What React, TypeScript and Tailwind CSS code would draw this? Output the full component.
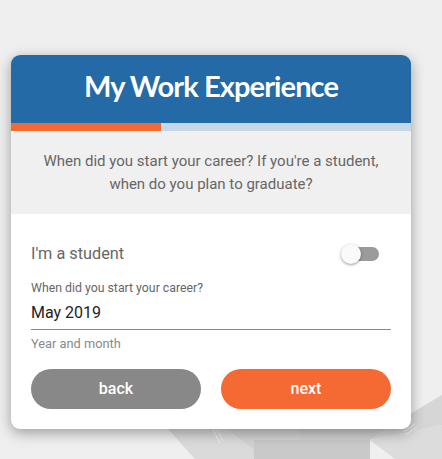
import { useState } from 'react'

function BackgroundArt() {
  return (
    <svg
      className="absolute left-0 top-0 pointer-events-none"
      width="442"
      height="459"
      viewBox="0 0 442 459"
    >
      <polygon points="160,420 215,420 265,459 195,459" fill="#dadada" />
      <polygon points="215,420 300,420 300,459 265,459" fill="#d2d2d2" />
      <polygon points="254,440 370,440 370,459 254,459" fill="#c9c9c9" />
      <polygon points="300,420 400,420 370,440 300,440" fill="#cfcfcf" />
      <polygon points="370,440 442,425 442,459 395,459" fill="#dcdcdc" />
      <polygon points="400,420 442,395 442,425 370,440" fill="#d6d6d6" />
      <line x1="213" y1="430" x2="220" y2="443" stroke="#f2f2f2" strokeWidth="1" />
      <line x1="217" y1="430" x2="223" y2="441" stroke="#f2f2f2" strokeWidth="1" />
      <line x1="403" y1="432" x2="415" y2="424" stroke="#f2f2f2" strokeWidth="1" />
      <line x1="405" y1="435" x2="417" y2="427" stroke="#f2f2f2" strokeWidth="1" />
    </svg>
  )
}

export default function App() {
  const [student, setStudent] = useState(false)

  return (
    <div className="relative w-[442px] h-[459px] overflow-hidden bg-[#efefef] pt-[55px] pl-[11px] font-['Roboto',sans-serif]">
      <BackgroundArt />

      <div className="relative w-[400px] rounded-[9px] bg-white shadow-[0_4px_14px_rgba(0,0,0,0.35)] overflow-hidden">
        {/* Header */}
        <div className="h-[68px] bg-[#246aa7] flex items-center justify-center">
          <h1 className="text-white text-[29px] font-bold tracking-[-0.9px] font-['Lato',sans-serif] leading-none pb-[7px]">
            My Work Experience
          </h1>
        </div>

        {/* Progress */}
        <div className="h-2 bg-[#c6d8e8]">
          <div className="h-full w-[150px] bg-[#f56932]" />
        </div>

        {/* Question */}
        <div className="bg-[#f0f0f0] px-4 pt-[19px] pb-[18px] text-center text-[15px] leading-[23px] text-[#666]">
          When did you start your career? If you're a student,
          <br />
          when do you plan to graduate?
        </div>

        {/* Form */}
        <div className="px-5 pt-5 pb-5">
          <div className="flex items-center justify-between h-10">
            <span className="text-[16.3px] text-[#666]">I'm a student</span>
            <button
              type="button"
              onClick={() => setStudent(!student)}
              className="relative w-[40px] h-5 mr-[10px]"
            >
              <span className="absolute left-[4px] top-[3px] w-[34px] h-[14px] rounded-full bg-[#9b9b9b]" />
              <span className="absolute left-0 top-0 w-5 h-5 rounded-full bg-[#fafafa] shadow-[0_1px_3px_rgba(0,0,0,0.4)]" />
            </button>
          </div>

          <div className="mt-[7px]">
            <div className="text-[12.3px] leading-[14px] text-[#666]">When did you start your career?</div>
            <div className="mt-[8px] pb-[6px] text-[16px] leading-[20px] text-[#222] border-b border-[#8a8a8a]">
              May 2019
            </div>
            <div className="mt-[6px] text-[12.8px] leading-[15px] text-[#8a8a8a]">Year and month</div>
          </div>

          <div className="mt-[18px] flex gap-5">
            <button className="flex-1 h-10 rounded-full bg-[#888888] text-white text-[16px] font-medium">
              back
            </button>
            <button className="flex-1 h-10 rounded-full bg-[#f56932] text-white text-[16px] font-medium">
              next
            </button>
          </div>
        </div>
      </div>
    </div>
  )
}
